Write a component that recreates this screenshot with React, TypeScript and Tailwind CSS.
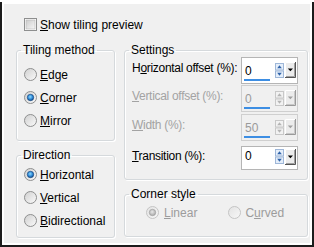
import React from "react";

const font = "font-['Liberation_Sans',Arial,sans-serif]";

function Checkbox() {
  return (
    <svg width="13" height="13" viewBox="0 0 13 13">
      <defs>
        <linearGradient id="cbg" x1="0" y1="0" x2="1" y2="1">
          <stop offset="0" stopColor="#cbcbcb" />
          <stop offset="1" stopColor="#f7f7f7" />
        </linearGradient>
      </defs>
      <rect x="0.5" y="0.5" width="12" height="12" fill="#fff" stroke="#8e8f8f" />
      <rect x="2" y="2" width="9" height="9" fill="url(#cbg)" stroke="#b4b4b4" strokeWidth="0.6" />
    </svg>
  );
}

function Radio({ checked = false, disabled = false }: { checked?: boolean; disabled?: boolean }) {
  return (
    <svg width="13" height="13" viewBox="0 0 13 13" className="shrink-0">
      <defs>
        <linearGradient id="rbg" x1="0" y1="0" x2="1" y2="1">
          <stop offset="0" stopColor="#cfcfcf" />
          <stop offset="1" stopColor="#fbfbfb" />
        </linearGradient>
        <linearGradient id="rbgd" x1="0" y1="0" x2="1" y2="1">
          <stop offset="0" stopColor="#e2e2e2" />
          <stop offset="1" stopColor="#f8f8f8" />
        </linearGradient>
        <radialGradient id="rdot" cx="0.45" cy="0.4" r="0.6">
          <stop offset="0" stopColor="#8fdcff" />
          <stop offset="0.6" stopColor="#2f8ad8" />
          <stop offset="1" stopColor="#134a86" />
        </radialGradient>
        <radialGradient id="rdotd" cx="0.45" cy="0.4" r="0.6">
          <stop offset="0" stopColor="#e8e8e8" />
          <stop offset="1" stopColor="#a8a8a8" />
        </radialGradient>
      </defs>
      <circle cx="6.5" cy="6.5" r="6" fill={disabled ? "url(#rbgd)" : "url(#rbg)"} stroke={disabled ? "#c4c4c4" : "#8e8f8f"} />
      {checked && (
        <circle cx="6.5" cy="6.5" r="3.2" fill={disabled ? "url(#rdotd)" : "url(#rdot)"} stroke={disabled ? "#a0a0a0" : "#1b4d85"} strokeWidth="0.7" />
      )}
    </svg>
  );
}

function Spin({ disabled = false }: { disabled?: boolean }) {
  const fill = disabled ? "#f2f2f2" : "#e4eefa";
  const stroke = disabled ? "#c8c8c8" : "#9fb7d8";
  const arrow = disabled ? "#b4b4b4" : "#2f62a8";
  return (
    <svg width="9" height="15" viewBox="0 0 9 15" className="shrink-0">
      <rect x="0.5" y="0.5" width="8" height="6.5" fill={fill} stroke={stroke} />
      <rect x="0.5" y="8" width="8" height="6.5" fill={fill} stroke={stroke} />
      <path d="M2.2 5.2 L4.5 2.3 L6.8 5.2Z" fill={arrow} />
      <path d="M2.2 9.8 L4.5 12.7 L6.8 9.8Z" fill={arrow} />
    </svg>
  );
}

function Drop({ disabled = false }: { disabled?: boolean }) {
  return (
    <svg width="11" height="16" viewBox="0 0 11 16" className="shrink-0">
      <rect x="0" y="0" width="11" height="16" fill="#ececec" />
      <path d="M0.5 15.5 V0.5 H10.5" stroke="#ffffff" fill="none" />
      <path d="M10.5 0 V15.5 H0" stroke={disabled ? "#9a9a9a" : "#555555"} fill="none" />
      <path d="M9.5 1 V14.5 H1" stroke={disabled ? "#c8c8c8" : "#a0a0a0"} fill="none" />
      <path d="M2.8 6.5 H8 L5.4 9.3Z" fill={disabled ? "#a0a0a0" : "#000"} />
    </svg>
  );
}

function NumBox({ value, disabled = false, bar = true }: { value: string; disabled?: boolean; bar?: boolean }) {
  return (
    <div
      className={`flex items-start shrink-0 w-[57px] ${bar ? "h-[27px]" : "h-[24px]"} border ${
        disabled ? "border-[#cfcfcf] bg-[#f0f0f0]" : "border-[#b5b5b5] bg-white"
      }`}
    >
      <div className={`flex flex-col w-[30px] pl-[2px] ${bar ? "pt-[6px]" : "pt-[2px]"}`}>
        <span className={`text-[12px] leading-[14px] pl-[1px] ${disabled ? "text-[#9a9a9a]" : "text-black"}`}>{value}</span>
        {bar && <div className="mt-[1px] h-[2px] w-[26px] bg-[#3d8ee3]" />}
      </div>
      <div className={`ml-[3px] ${bar ? "mt-[5px]" : "mt-[2px]"}`}>
        <Spin disabled={disabled} />
      </div>
      <div className={`ml-[1px] ${bar ? "mt-[4px]" : "mt-[2px]"}`}>
        <Drop disabled={disabled} />
      </div>
    </div>
  );
}

function Group({ title, className, children }: { title: string; className: string; children: React.ReactNode }) {
  return (
    <fieldset className={`border border-[#d5d9dc] rounded-[3px] shadow-[1px_1px_0_#ffffff,inset_1px_1px_0_#ffffff] ${className}`}>
      <legend className="ml-[4px] px-[2px] text-[12px] leading-[14px] text-black">{title}</legend>
      {children}
    </fieldset>
  );
}

function RadioRow({ label, checked }: { label: React.ReactNode; checked?: boolean }) {
  return (
    <div className="flex items-center h-[13px] pl-[7px] gap-[3px]">
      <Radio checked={checked} />
      <span className="text-[12px] leading-[14px] text-black whitespace-nowrap">{label}</span>
    </div>
  );
}

function Row({ label, disabled, value, bar = true, className = "" }: { label: React.ReactNode; disabled?: boolean; value: string; bar?: boolean; className?: string }) {
  return (
    <div className={`flex justify-between items-start pl-[7px] pr-[9px] ${className}`}>
      <span
        className={`text-[12px] leading-[14px] whitespace-nowrap tracking-[-0.3px] ${bar ? "pt-[4px]" : "pt-[3px]"} ${
          disabled ? "text-[#a3a3a3]" : "text-black"
        }`}
      >
        {label}
      </span>
      <NumBox value={value} disabled={disabled} bar={bar} />
    </div>
  );
}

export default function App() {
  return (
    <div className={`w-[314px] h-[247px] bg-white pt-[2px] ${font}`}>
      <div className="h-[245px] border-l-2 border-r-2 border-b-2 border-[#1c1c1c] p-[2px] bg-white">
        <div className="h-full bg-[#f0f0f0] pt-[14px]">
          <div className="flex items-center h-[13px] ml-[20px] gap-[3px]">
            <Checkbox />
            <span className="text-[12px] leading-[14px] text-black whitespace-nowrap">
              <u>S</u>how tiling preview
            </span>
          </div>

          <div className="flex gap-[9px] ml-[12px] mt-[12px]">
            <div className="flex flex-col w-[99px] gap-[7px]">
              <Group title="Tiling method" className="h-[98px]">
                <div className="flex flex-col gap-[10px] mt-[11px]">
                  <RadioRow label={<><u>E</u>dge</>} />
                  <RadioRow label={<><u>C</u>orner</>} checked />
                  <RadioRow label={<><u>M</u>irror</>} />
                </div>
              </Group>
              <Group title="Direction" className="h-[90px]">
                <div className="flex flex-col gap-[10px] mt-[6px]">
                  <RadioRow label={<><u>H</u>orizontal</>} checked />
                  <RadioRow label={<><u>V</u>ertical</>} />
                  <RadioRow label={<><u>B</u>idirectional</>} />
                </div>
              </Group>
            </div>

            <div className="flex flex-col w-[184px] gap-[7px]">
              <Group title="Settings" className="h-[137px]">
                <Row label={<>H<u>o</u>rizontal offset (%):</>} value="0" />
                <Row label={<><u>V</u>ertical offset (%):</>} value="0" disabled className="mt-[1px]" />
                <Row label={<><u>W</u>idth (%):</>} value="50" disabled className="mt-[2px]" />
                <Row label={<><u>T</u>ransition (%):</>} value="0" bar={false} className="mt-[5px]" />
              </Group>
              <Group title="Corner style" className="h-[50px]">
                <div className="flex items-center h-[13px] mt-[5px] pl-[21px]">
                  <Radio checked disabled />
                  <span className="ml-[5px] text-[12px] leading-[14px] text-[#9c9c9c]">
                    <u>L</u>inear
                  </span>
                  <div className="ml-[31px]">
                    <Radio disabled />
                  </div>
                  <span className="ml-[4px] text-[12px] leading-[14px] text-[#9c9c9c]">
                    C<u>u</u>rved
                  </span>
                </div>
              </Group>
            </div>
          </div>
        </div>
      </div>
    </div>
  );
}
